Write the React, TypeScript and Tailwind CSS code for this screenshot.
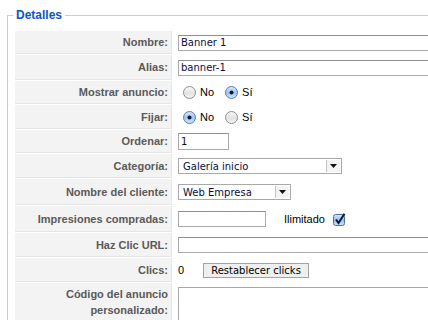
import React from "react";

// Joomla-style admin form: "Detalles" fieldset with key/value rows

function TextInput({ value, className }: { value?: string; className: string }) {
  return (
    <div
      className={`flex items-center h-[16px] border border-[#a9a9a9] border-t-[#8f8f8f] bg-white px-[2px] text-[10px] text-[#0c0c3c] font-['DejaVu_Sans',sans-serif] ${className}`}
    >
      {value}
    </div>
  );
}

function Select({ value, className }: { value: string; className: string }) {
  return (
    <div
      className={`flex items-stretch h-[16px] border border-[#a9a9a9] bg-white text-[10px] text-[#0c0c3c] font-['DejaVu_Sans',sans-serif] ${className}`}
    >
      <div className="flex-1 flex items-center px-[4px]">{value}</div>
      <div className="w-[14px] flex items-center justify-center border-l border-[#c4c4c4] bg-[#f4f4f4] m-px">
        <svg width="7" height="4" viewBox="0 0 7 4">
          <path d="M0 0 H7 L3.5 4 Z" fill="#111" />
        </svg>
      </div>
    </div>
  );
}

function Radio({ checked }: { checked?: boolean }) {
  const id = checked ? "rOn" : "rOff";
  return (
    <svg width="13" height="13" viewBox="0 0 13 13">
      <defs>
        <linearGradient id={id} x1="0" y1="0" x2="0" y2="1">
          {checked ? (
            <>
              <stop offset="0" stopColor="#d9ebfc" />
              <stop offset="0.5" stopColor="#9cc6f0" />
              <stop offset="1" stopColor="#cfe6fb" />
            </>
          ) : (
            <>
              <stop offset="0" stopColor="#fbfbfb" />
              <stop offset="0.55" stopColor="#e2e2e2" />
              <stop offset="1" stopColor="#f6f6f6" />
            </>
          )}
        </linearGradient>
      </defs>
      <circle cx="6.5" cy="6.5" r="6" fill={`url(#${id})`} stroke={checked ? "#5d7fa6" : "#8e8e8e"} strokeWidth="1" />
      {checked && <circle cx="6.5" cy="6.5" r="2" fill="#121826" />}
    </svg>
  );
}

function Checkbox() {
  return (
    <svg width="13" height="13" viewBox="0 0 13 13">
      <defs>
        <linearGradient id="cb" x1="0" y1="0" x2="0" y2="1">
          <stop offset="0" stopColor="#d6e9fc" />
          <stop offset="0.5" stopColor="#95c1ee" />
          <stop offset="1" stopColor="#c8e1fa" />
        </linearGradient>
      </defs>
      <rect x="0.5" y="1.5" width="11" height="11" rx="2" fill="url(#cb)" stroke="#51719c" />
      <path d="M3 6.5 L5.5 10 L11.5 0.8" fill="none" stroke="#0e1834" strokeWidth="2" />
    </svg>
  );
}

function Row({ label, className, top, children }: { label: React.ReactNode; className: string; top?: boolean; children?: React.ReactNode }) {
  return (
    <div className={`flex ${className}`}>
      <div
        className={`w-[157px] shrink-0 flex justify-end bg-[#f3f3f3] border-r border-b border-[#e6e6e6] pr-[3px] text-right text-[11px] font-bold text-[#5a5a5a] leading-[16px] font-['Liberation_Sans',Arial,sans-serif] ${top ? "items-start pt-[3px]" : "items-center"}`}
      >
        {label}
      </div>
      <div className={`ml-px pl-[5px] flex flex-1 ${top ? "items-start pt-[4px]" : "items-center"}`}>{children}</div>
    </div>
  );
}

const plain = "text-[11px] text-black font-['Liberation_Sans',Arial,sans-serif]";

function YesNo({ yes }: { yes?: boolean }) {
  return (
    <div className={`flex items-center pl-[5px] ${plain}`}>
      <Radio checked={!yes} />
      <span className="ml-[4px] mr-[11px]">No</span>
      <Radio checked={yes} />
      <span className="ml-[4px]">Sí</span>
    </div>
  );
}

export default function App() {
  return (
    <div className="w-[428px] h-[320px] overflow-hidden bg-white pt-[8px]">
      <fieldset className="ml-[7px] w-[600px] border border-[#cccccc] pl-[5px] pb-[10px]">
        <legend className="px-[3px] text-[12px] leading-[15px] font-bold text-[#0b55c4] font-['Liberation_Sans',Arial,sans-serif]">
          Detalles
        </legend>
        <div className="mt-[8px] ml-[2px] flex flex-col gap-px">
          <Row label="Nombre:" className="h-[23px]">
            <TextInput value="Banner 1" className="w-[300px]" />
          </Row>
          <Row label="Alias:" className="h-[25px]">
            <TextInput value="banner-1" className="w-[300px]" />
          </Row>
          <Row label="Mostrar anuncio:" className="h-[23px]">
            <YesNo yes />
          </Row>
          <Row label="Fijar:" className="h-[24px]">
            <YesNo />
          </Row>
          <Row label="Ordenar:" className="h-[23px]">
            <TextInput value="1" className="w-[51px] h-[17px]" />
          </Row>
          <Row label="Categoría:" className="h-[24px]">
            <Select value="Galería inicio" className="w-[164px]" />
          </Row>
          <Row label="Nombre del cliente:" className="h-[26px]">
            <Select value="Web Empresa" className="w-[113px]" />
          </Row>
          <Row label="Impresiones compradas:" className="h-[26px]">
            <TextInput className="w-[88px]" />
            <span className={`ml-[18px] ${plain}`}>Ilimitado</span>
            <span className="ml-[8px] flex">
              <Checkbox />
            </span>
          </Row>
          <Row label="Haz Clic URL:" className="h-[24px]">
            <TextInput className="w-[300px]" />
          </Row>
          <Row label="Clics:" className="h-[24px]">
            <span className={`w-[25px] ${plain}`}>0</span>
            <button className="h-[15px] w-[106px] border border-[#a3a3a3] bg-[#efefef] text-[10px] leading-[13px] text-black font-['DejaVu_Sans',sans-serif]">
              Restablecer clicks
            </button>
          </Row>
          <Row
            label={
              <span>
                Código del anuncio
                <br />
                personalizado:
              </span>
            }
            className="h-[60px]"
            top
          >
            <div className="w-[300px] h-[50px] border border-[#a9a9a9] bg-white" />
          </Row>
        </div>
      </fieldset>
    </div>
  );
}
